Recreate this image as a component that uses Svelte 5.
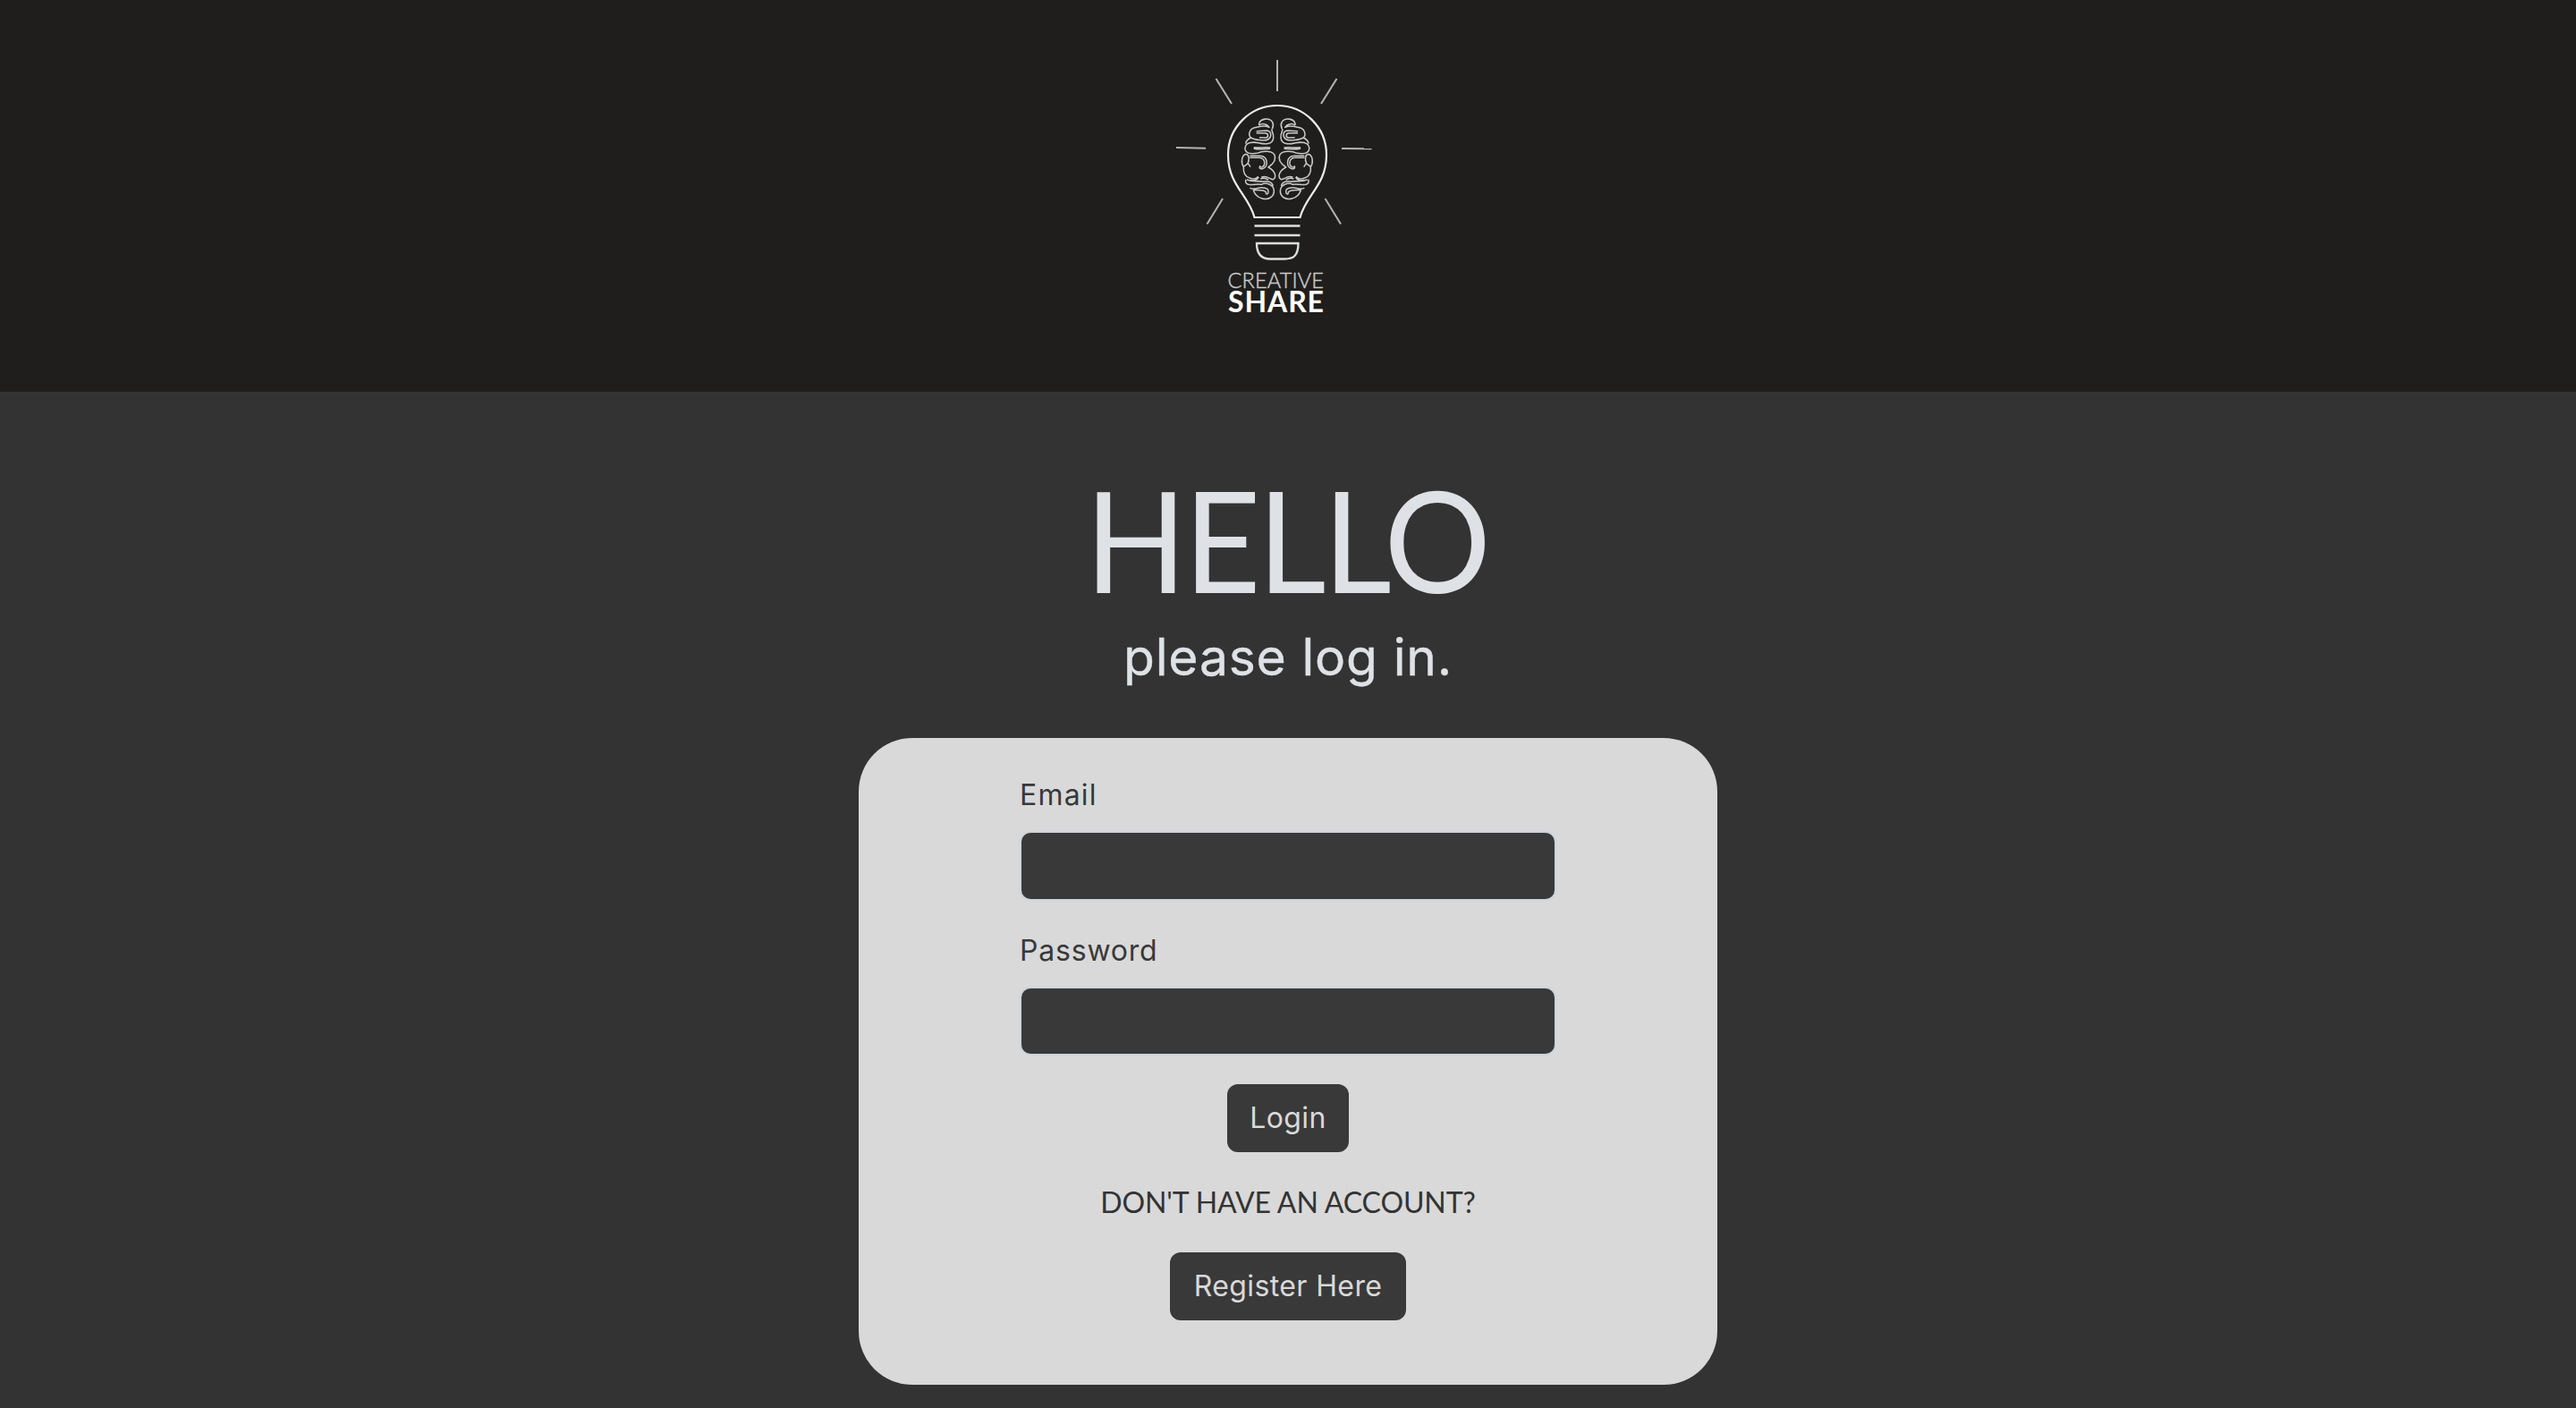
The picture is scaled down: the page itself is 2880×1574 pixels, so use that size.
<script>
  const rays = [
    'M1428 67V102', 'M1359.500 88L1377 116', 'M1494.500 88L1477 116',
    'M1315 165L1348 165.700', 'M1500 166L1533.500 166.300',
    'M1367 222L1349.500 250.500', 'M1481.500 222L1499 250.500'
  ];
  const lobes = [
    'M142 88C145 66 178 63 188 80C192 88 191 95 187 102',
    'M142 90C154 82 170 86 177 97C158 88 142 96 127 98C109 104 106 124 116 132C126 139 164 143 172 138C186 130 186 110 169 108L134 110',
    'M134 116H163C177 117 174 132 165 132L144 131',
    'M187 102C181 108 193 113 191 132C189 157 160 154 142 149C130 147 112 147 104 152C93 160 93 174 103 181C113 188 127 184 137 184',
    'M116 132C106 136 99 143 98 152M125 168C138 172 156 171 180 169M125 164C142 169 166 160 181 166M137 184C152 176 184 174 194 188C202 204 193 218 174 231C186 237 195 245 197 258C198 271 189 275 181 269C171 265 164 259 151 264M148 270C158 265 165 267 174 273',
    'M99 187C83 191 82 217 91 229L106 218L114 230M99 187C110 188 111 206 105 218M112 199H145C165 201 165 226 153 230L144 232M112 193H146C174 194 175 231 154 236C146 238 141 232 147 226',
    'M91 229C89 252 98 263 112 267C127 274 139 266 139 261M112 274C125 279 137 273 142 264',
    'M99 272C96 279 98 286 107 289C126 291 137 285 151 289C166 279 192 290 193 309C194 332 172 341 154 336C142 333 130 325 124 308M112 300C124 309 139 298 152 299C170 300 175 305 174 314C173 323 165 324 166 314C154 304 139 310 122 306M102 272C117 281 148 276 159 279C176 277 187 284 190 293'
  ];
</script>

<main>
  <header>
    <svg class="logo" viewBox="1221 0 438 438" role="img" aria-label="Creative Share">
      <g class="rays">{#each rays as d}<path {d} />{/each}</g>
      <path class="bulb" d="M1402.500 243C1396 218 1373 207 1373 173A55 55 0 0 1 1483 173C1483 207 1460 218 1453.500 243Z" />
      <path class="base" d="M1402.500 252.500H1453.500M1402.500 263H1453.500M1405 272H1451.500C1451.500 286 1446 289.500 1436 289.500H1420C1410 289.500 1405 284 1405 272Z" />
      <g class="brain" transform="translate(1360 110) scale(.33333)">{#each lobes as d}<path {d} />{/each}</g>
      <g class="brain" transform="translate(1495.700 110) scale(-.33333 .33333)">{#each lobes as d}<path {d} />{/each}</g>
      <text class="word thin" x="1372.500" y="321.500" textLength="107.500">CREATIVE</text>
      <text class="word bold" x="1373" y="349" textLength="107">SHARE</text>
    </svg>
  </header>
  <section class="content">
    <h1>HELLO</h1>
    <h2>please log in.</h2>
    <form>
      <label for="email">Email</label>
      <input id="email" type="email" />
      <label for="password" class="second">Password</label>
      <input id="password" type="password" class="short" />
      <button type="button" class="login">Login</button>
      <p>DON'T HAVE AN ACCOUNT?</p>
      <button type="button" class="register">Register Here</button>
    </form>
  </section>
</main>

<style>
  :global(body) { margin: 0; background: #333; }
  main { height: 1574px; overflow: hidden; background: #333; color: #dee2e6; font-family: Inter, sans-serif; }
  header { height: 438px; background: #1f1e1c; display: flex; justify-content: center; }
  .logo { width: 438px; height: 438px; fill: none; stroke: #ececec; }
  .rays { stroke: #b4b4b4; stroke-width: 2; }
  .bulb { stroke-width: 2.2; }
  .base { stroke-width: 2.4; stroke: #dedede; }
  .brain { stroke: #c8c8c8; stroke-width: 4.6; stroke-linejoin: round; }
  .word { stroke: none; font-family: Lato, sans-serif; }
  .thin { font-size: 23.5px; font-weight: 300; fill: #ccc; stroke: #ccc; stroke-width: .4; }
  .bold { font-size: 32px; font-weight: 700; fill: #fff; }
  .content { display: flex; flex-direction: column; align-items: center; }
  h1, h2, p { margin: 0; font-weight: 400; white-space: nowrap; }
  h1 { margin-top: 68px; height: 196px; font: 400 157px/192px Lato, sans-serif; letter-spacing: -3.6px; padding-right: 3px; transform: scaleX(.95); }
  h2 { height: 69px; font-size: 57px; line-height: 66px; letter-spacing: .8px; -webkit-text-stroke: .4px #dee2e6; }
  form { box-sizing: border-box; width: 960px; height: 723px; margin-top: 54px; padding: 40px 180px; border-radius: 60px; background: #d9d9d9; display: flex; flex-direction: column; align-items: center; }
  label { align-self: flex-start; height: 48px; font-size: 32px; line-height: 48px; letter-spacing: 1.2px; color: #393939; }
  input { box-sizing: border-box; width: 600px; height: 78px; margin: 16px 0 0; border: 2px solid #ced4da; border-radius: 12px; background: #393939; }
  .second { margin-top: 32px; letter-spacing: .8px; }
  .short { height: 77px; }
  button { height: 76px; padding: 0; border: 0; border-radius: 12px; background: #393939; color: #d9d9d9; font: 400 32px/48px Inter, sans-serif; letter-spacing: .4px; }
  .login { width: 136px; margin-top: 32px; }
  p { margin-top: 32px; height: 48px; font: 400 32px/48px Lato, sans-serif; letter-spacing: -.1px; color: #333; }
  .register { width: 264px; margin-top: 32px; }
</style>
